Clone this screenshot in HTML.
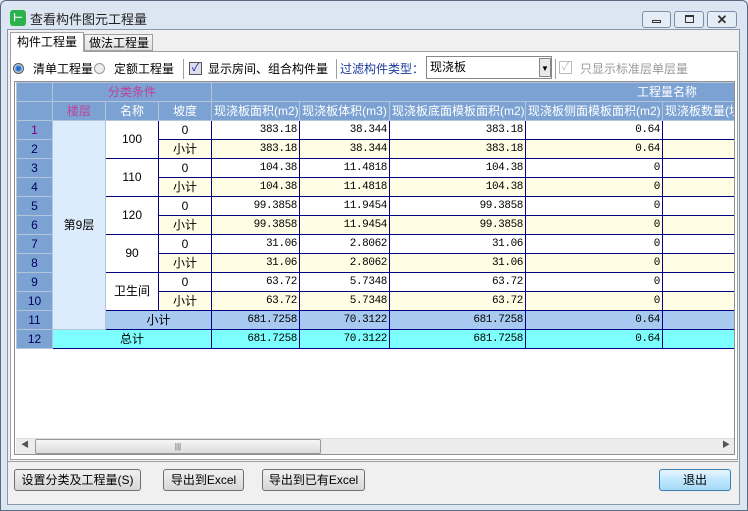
<!DOCTYPE html>
<html><head><meta charset="utf-8"><style>
*{margin:0;padding:0;box-sizing:border-box}
body{width:748px;height:511px;overflow:hidden;background:#dbe6f2;font-family:"Liberation Sans","Noto Sans CJK SC",sans-serif;font-size:12px;color:#000;position:relative}
.a{position:absolute;white-space:nowrap}
.win{left:7px;top:29px;width:733px;height:476px;background:#f0f0f0;border:1px solid #8a99ad}
.btn{position:absolute;height:22px;border:1px solid #707070;border-radius:3px;background:linear-gradient(#f2f2f2,#e4e4e4 50%,#d6d6d6);text-align:center;line-height:20px;font-size:12px;white-space:nowrap}
table{border-collapse:collapse;table-layout:fixed;position:absolute;left:16px;top:82px}
td{height:19px;padding:0 2px;border:1px solid #000080;overflow:hidden;white-space:nowrap;font-size:12px;line-height:17px}
td.n{text-align:right;font-family:"Liberation Mono",monospace;font-size:11px;letter-spacing:-0.4px}
td.h{background:#7ba2d2;color:#fff;border:1px solid #b4c4da;text-align:center;font-size:12px}
td.r{background:#7ba2d2;color:#000060;border:1px solid #b4c4da;text-align:center;font-size:12px}
td.y{background:#fffde4}
.c{text-align:center}
td.m{color:#c0409a}
.sub td{background:#a8caf0}
.tot td{background:#7dffff}
</style></head><body>
<div class="a" style="left:0;top:0;width:748px;height:511px;border:1px solid #5a6a80;border-radius:6px 6px 0 0;background:#dbe6f2"></div>
<div class="a" style="left:10px;top:10px;width:16px;height:16px;background:#2bb24c;border-radius:3px;color:#fff;font-size:11px;line-height:16px;text-align:center;font-weight:bold">⊢</div>
<div class="a" style="left:30px;top:9px;font-size:13px;color:#222">查看构件图元工程量</div>
<div class="a" style="left:642px;top:11px;width:29px;height:17px;border:1px solid #7d8ea6;border-radius:3px;background:#e4ecf6"><div class="a" style="left:9px;top:8px;width:9px;height:3px;border:1px solid #333"></div></div>
<div class="a" style="left:674px;top:11px;width:30px;height:17px;border:1px solid #7d8ea6;border-radius:3px;background:#e4ecf6"><div class="a" style="left:10px;top:3px;width:9px;height:8px;border:1px solid #333;border-top-width:2px"></div></div>
<div class="a" style="left:707px;top:11px;width:30px;height:17px;border:1px solid #7d8ea6;border-radius:3px;background:#e4ecf6;text-align:center;font-size:13px;line-height:15px;color:#333;font-weight:bold">✕</div>
<div class="a win"></div>
<div class="a" style="left:10px;top:51px;width:728px;height:409px;border:1px solid #a0a0a0;background:#fff"></div>
<div class="a" style="left:10px;top:32px;width:74px;height:20px;border:1px solid #a0a0a0;border-bottom:none;background:#fff;font-size:12px;padding-left:6px;line-height:18px">构件工程量</div>
<div class="a" style="left:84px;top:34px;width:69px;height:17px;border:1px solid #a0a0a0;background:linear-gradient(#f4f4f4,#e2e2e2);font-size:12px;padding-left:4px;line-height:16px">做法工程量</div>
<div class="a" style="left:13px;top:63px;width:11px;height:11px;border-radius:50%;border:1px solid #555;background:radial-gradient(#1e6fd0 30%,#bcd 60%)"></div>
<div class="a" style="left:33px;top:60px;font-size:12px">清单工程量</div>
<div class="a" style="left:94px;top:63px;width:11px;height:11px;border-radius:50%;border:1px solid #999;background:#eee"></div>
<div class="a" style="left:114px;top:60px;font-size:12px">定额工程量</div>
<div class="a" style="left:183px;top:59px;width:1px;height:20px;background:#a0a0a0"></div>
<div class="a" style="left:189px;top:62px;width:13px;height:13px;border:1px solid #555;background:#dde;font-size:11px;line-height:11px;text-align:center;color:#22a">✓</div>
<div class="a" style="left:208px;top:60px;font-size:12px">显示房间、组合构件量</div>
<div class="a" style="left:336px;top:59px;width:1px;height:20px;background:#a0a0a0"></div>
<div class="a" style="left:340px;top:60px;font-size:12px;color:#1a3a9a">过滤构件类型：</div>
<div class="a" style="left:426px;top:56px;width:126px;height:23px;border:1px solid #828790;background:#fff;font-size:12px;padding-left:3px;line-height:21px">现浇板</div>
<div class="a" style="left:539px;top:58px;width:12px;height:19px;border:1px solid #888;background:#e8e8e8;font-size:8px;text-align:center;line-height:19px">▼</div>
<div class="a" style="left:555px;top:59px;width:1px;height:20px;background:#a0a0a0"></div>
<div class="a" style="left:559px;top:61px;width:13px;height:13px;border:1px solid #bbb;font-size:11px;line-height:11px;text-align:center;color:#bbb">✓</div>
<div class="a" style="left:580px;top:60px;font-size:12px;color:#999">只显示标准层单层量</div>
<div class="a" style="left:14px;top:81px;width:721px;height:374px;border:1px solid #909090;background:#fff;overflow:hidden">
<table style="left:1px;top:0;width:800px">
<colgroup><col style="width:36px"><col style="width:53px"><col style="width:53px"><col style="width:53px"><col style="width:88px"><col style="width:90px"><col style="width:136px"><col style="width:137px"><col style="width:154px"></colgroup>
<tr><td class="h"></td><td class="h m" colspan="3">分类条件</td><td class="h" colspan="5" style="text-align:left;padding-left:425px">工程量名称</td></tr>
<tr><td class="h"></td><td class="h m">楼层</td><td class="h">名称</td><td class="h">坡度</td><td class="h">现浇板面积(m2)</td><td class="h">现浇板体积(m3)</td><td class="h">现浇板底面模板面积(m2)</td><td class="h">现浇板侧面模板面积(m2)</td><td class="h" style="text-align:left">现浇板数量(块)</td></tr>
<tr><td class="r" style="color:#800080">1</td><td rowspan="11" class="c" style="background:#dcecfc;border-color:#b4c4da">第9层</td><td rowspan="2" class="c">100</td><td class="c">0</td><td class="n">383.18</td><td class="n">38.344</td><td class="n">383.18</td><td class="n">0.64</td><td></td></tr>
<tr><td class="r">2</td><td class="c y">小计</td><td class="n y">383.18</td><td class="n y">38.344</td><td class="n y">383.18</td><td class="n y">0.64</td><td class="y"></td></tr>
<tr><td class="r">3</td><td rowspan="2" class="c">110</td><td class="c">0</td><td class="n">104.38</td><td class="n">11.4818</td><td class="n">104.38</td><td class="n">0</td><td></td></tr>
<tr><td class="r">4</td><td class="c y">小计</td><td class="n y">104.38</td><td class="n y">11.4818</td><td class="n y">104.38</td><td class="n y">0</td><td class="y"></td></tr>
<tr><td class="r">5</td><td rowspan="2" class="c">120</td><td class="c">0</td><td class="n">99.3858</td><td class="n">11.9454</td><td class="n">99.3858</td><td class="n">0</td><td></td></tr>
<tr><td class="r">6</td><td class="c y">小计</td><td class="n y">99.3858</td><td class="n y">11.9454</td><td class="n y">99.3858</td><td class="n y">0</td><td class="y"></td></tr>
<tr><td class="r">7</td><td rowspan="2" class="c">90</td><td class="c">0</td><td class="n">31.06</td><td class="n">2.8062</td><td class="n">31.06</td><td class="n">0</td><td></td></tr>
<tr><td class="r">8</td><td class="c y">小计</td><td class="n y">31.06</td><td class="n y">2.8062</td><td class="n y">31.06</td><td class="n y">0</td><td class="y"></td></tr>
<tr><td class="r">9</td><td rowspan="2" class="c">卫生间</td><td class="c">0</td><td class="n">63.72</td><td class="n">5.7348</td><td class="n">63.72</td><td class="n">0</td><td></td></tr>
<tr><td class="r">10</td><td class="c y">小计</td><td class="n y">63.72</td><td class="n y">5.7348</td><td class="n y">63.72</td><td class="n y">0</td><td class="y"></td></tr>
<tr class="sub"><td class="r" style="background:#7ba2d2">11</td><td colspan="2" class="c">小计</td><td class="n">681.7258</td><td class="n">70.3122</td><td class="n">681.7258</td><td class="n">0.64</td><td></td></tr>
<tr class="tot"><td class="r" style="background:#7ba2d2">12</td><td colspan="3" class="c">总计</td><td class="n">681.7258</td><td class="n">70.3122</td><td class="n">681.7258</td><td class="n">0.64</td><td></td></tr>
</table>
<div class="a" style="left:1px;top:356px;width:718px;height:16px;background:#ececec;border-top:1px solid #ddd"></div>
<div class="a" style="left:6px;top:357px;font-size:8px;color:#555">◀</div>
<div class="a" style="left:20px;top:357px;width:286px;height:15px;border:1px solid #999;border-radius:2px;background:linear-gradient(#f6f6f6,#dcdcdc);text-align:center;font-size:8px;line-height:13px;color:#555">|||</div>
<div class="a" style="left:707px;top:357px;font-size:8px;color:#555">▶</div>
</div>
<div class="a" style="left:8px;top:461px;width:730px;height:1px;background:#a0a0a0"></div>
<div class="btn" style="left:14px;top:469px;width:127px">设置分类及工程量(S)</div>
<div class="btn" style="left:163px;top:469px;width:81px">导出到Excel</div>
<div class="btn" style="left:262px;top:469px;width:103px">导出到已有Excel</div>
<div class="btn" style="left:659px;top:469px;width:72px;border-color:#3c7fb1;background:linear-gradient(#eaf6fd,#bee6fd 50%,#a7d9f5);font-size:12px">退出</div>
</body></html>
